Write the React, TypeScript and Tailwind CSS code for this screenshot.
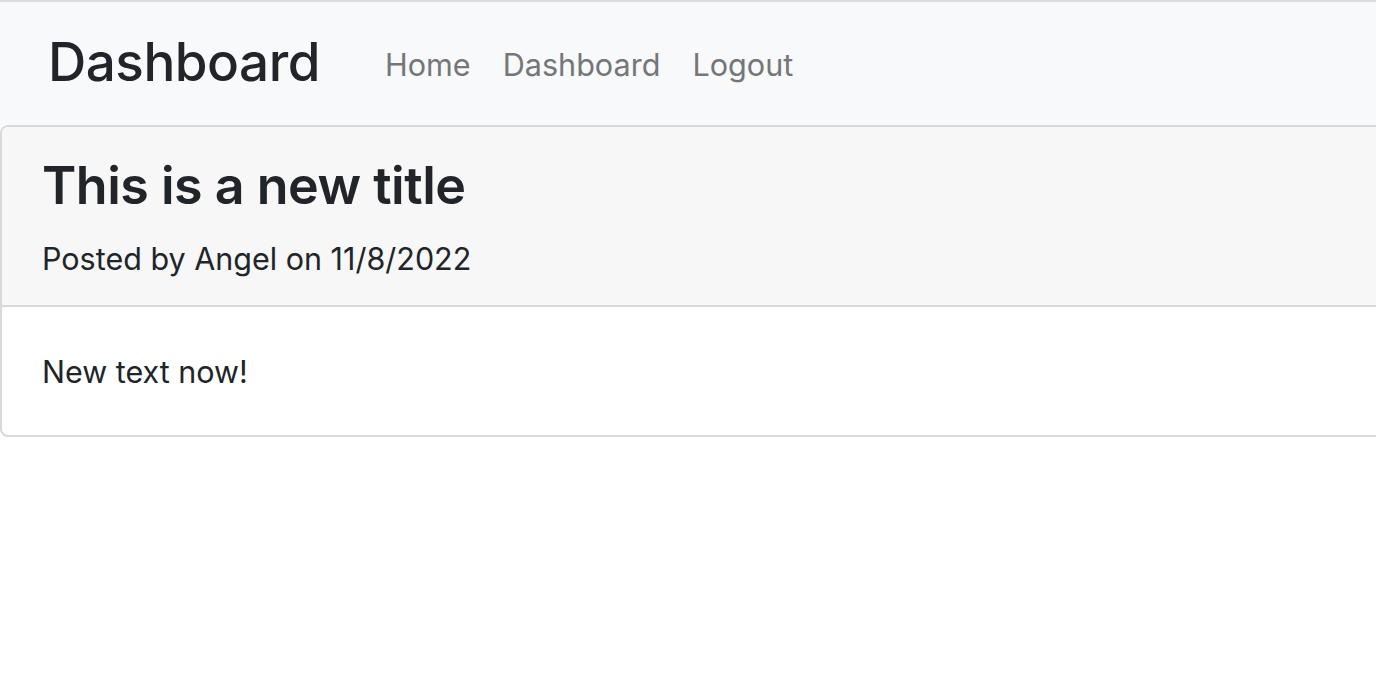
import React from 'react';

const links = ['Home', 'Dashboard', 'Logout'];

const App: React.FC = () => {
  return (
    <div className="min-h-screen w-full overflow-hidden bg-white text-[#212529] font-['Inter',sans-serif]">
      {/* Navbar */}
      <nav className="h-[125px] border-t-2 border-[#dcdcdc] bg-[#f8f9fa] flex items-center pl-[48px] pb-[2px]">
        <a className="text-[53px] font-medium tracking-[-0.5px] leading-none">Dashboard</a>
        <ul className="flex items-center gap-[32px] ml-[65px] mt-[6px]">
          {links.map((l) => (
            <li key={l} className="text-[30.6px] text-[#757678] leading-none">
              {l}
            </li>
          ))}
        </ul>
      </nav>

      {/* Post card */}
      <div className="w-[1400px] border-2 border-[#d9d9d9] rounded-[8px] overflow-hidden">
        <div className="bg-[#f7f7f7] border-b-2 border-[#d9d9d9] h-[180px] px-[40px] pt-[28px]">
          <h2 className="text-[52px] font-semibold leading-[1.2] tracking-[-0.5px]">This is a new title</h2>
          <p className="text-[30.5px] mt-[24px] leading-[1.2]">Posted by Angel on 11/8/2022</p>
        </div>
        <div className="h-[128px] px-[40px] pt-[47px]">
          <p className="text-[30.5px] leading-[1.2]">New text now!</p>
        </div>
      </div>
    </div>
  );
};

export default App;
